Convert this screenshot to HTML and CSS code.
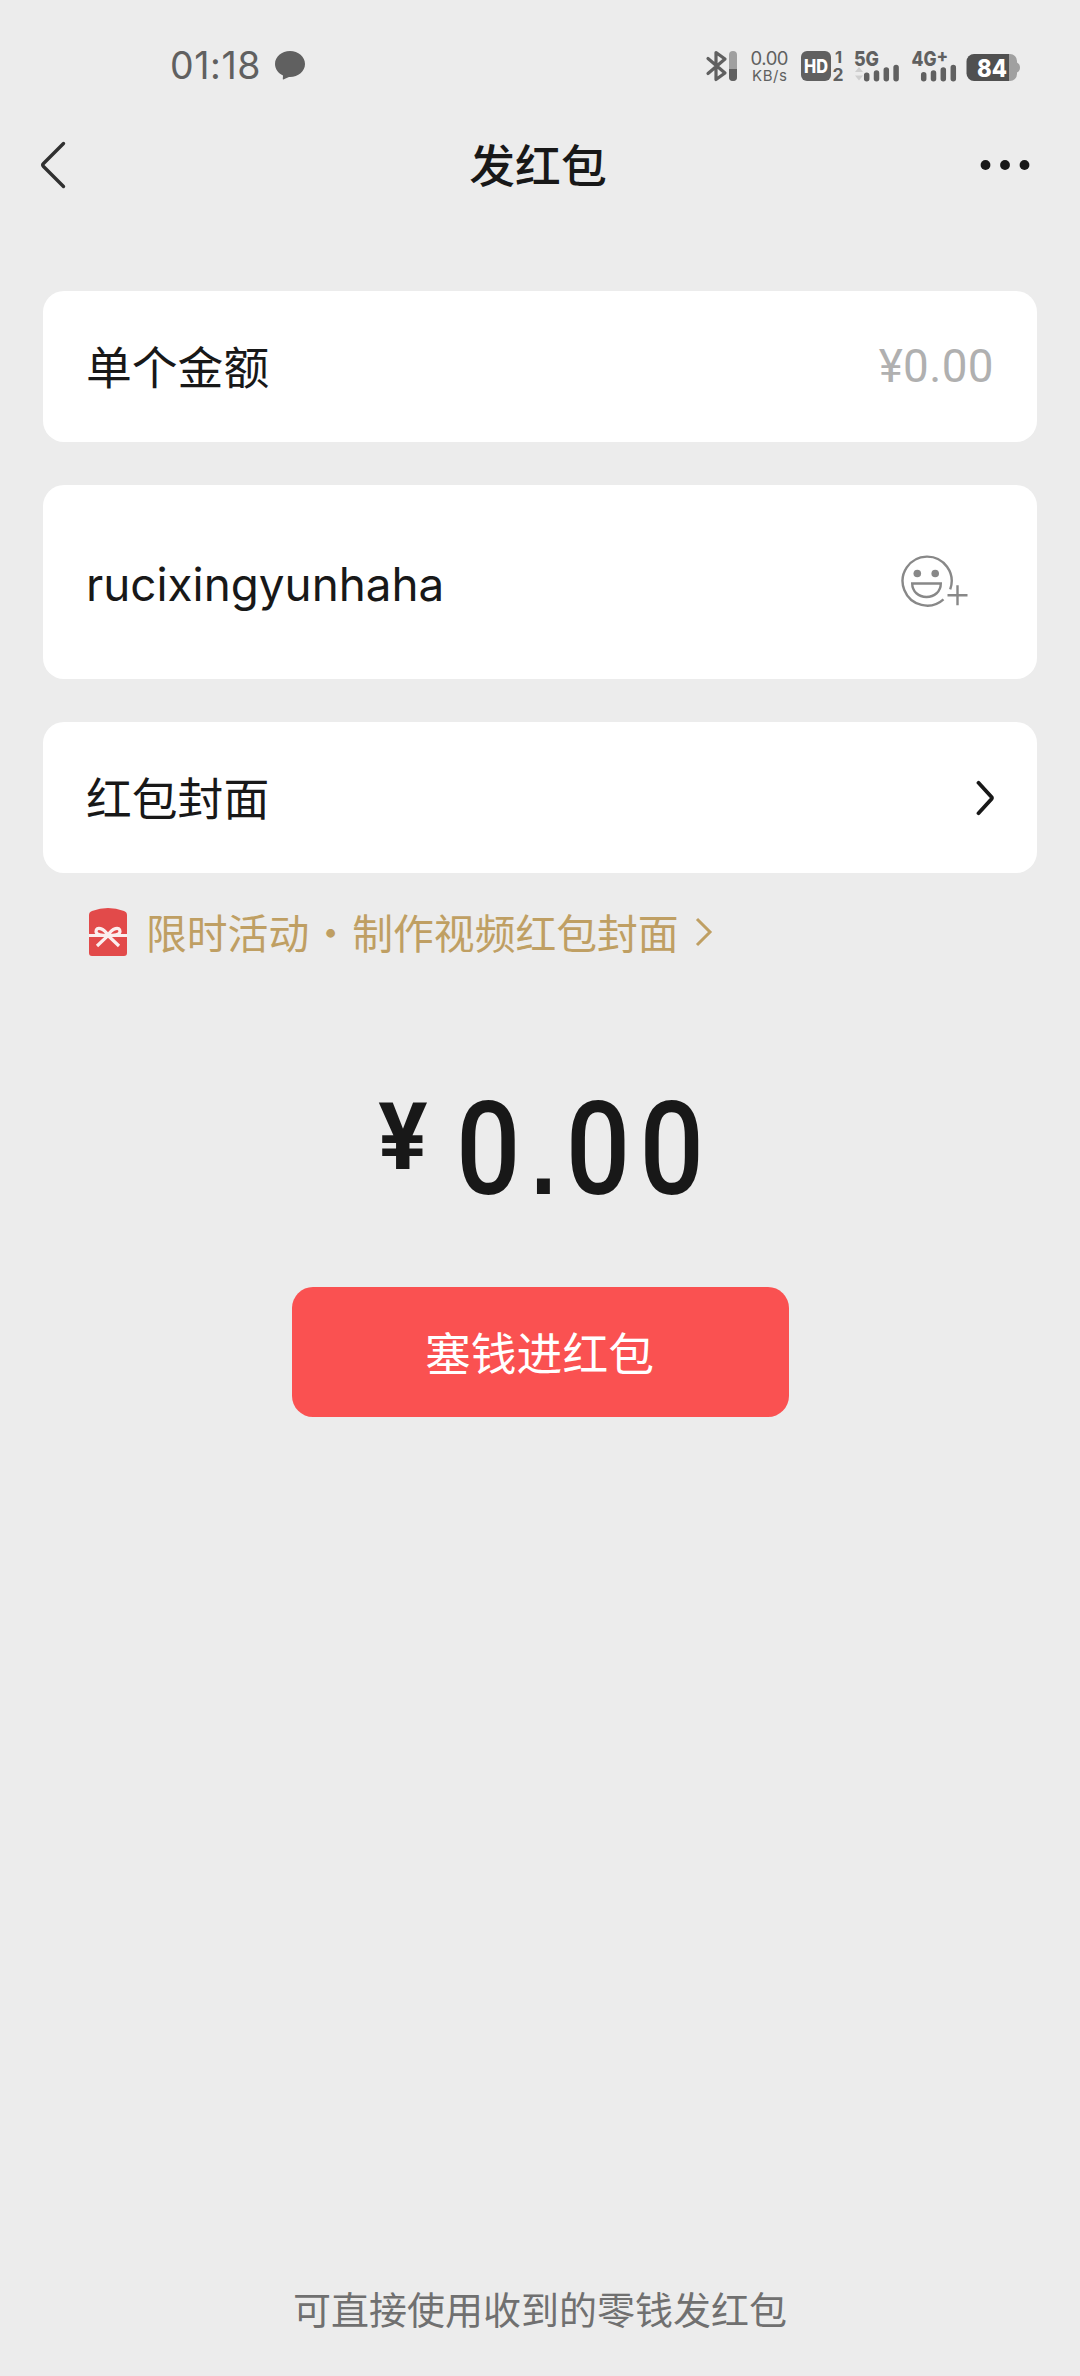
FILE: index.html
```html
<!DOCTYPE html>
<html lang="zh-CN">
<head>
<meta charset="utf-8">
<title>发红包</title>
<link rel="stylesheet" href="styles.css">
</head>
<body>
<div class="screen">
  <header class="status">
    <div class="status-left">
      <span class="time">01:18</span>
      <svg class="bubble" width="30" height="30" viewBox="0 0 30 30"><path d="M15 1C23.3 1 30 6.800 30 14S23.300 27 15 27L14 27Q11 28.500 8.400 29.400Q7.600 29.500 7.800 28.500L8 25.400C3.200 23.200 0 19 0 14C0 6.800 6.700 1 15 1Z"/></svg>
    </div>
    <svg class="status-icons" width="320" height="40" viewBox="702 46 320 40">
      <path class="bt" d="M708 58.500L725 73L716 79.500V52.500L725 59L708 73.500"/>
      <rect class="soft" x="729" y="51" width="8" height="30" rx="4"/>
      <path d="M729 69h8v8a4 4 0 0 1-8 0Z"/>
      <text class="thin" x="750.500" y="65" font-size="18.500" textLength="38">0.00</text>
      <text class="thin" x="752" y="81" font-size="15" textLength="35">KB/s</text>
      <rect x="801" y="51" width="30" height="30" rx="6"/>
      <text class="bold light" x="804" y="73" font-size="18.500" textLength="24" lengthAdjust="spacingAndGlyphs">HD</text>
      <text class="semi" x="835" y="62.500" font-size="16.500">1</text>
      <text class="semi" x="832.500" y="80.500" font-size="17.500">2</text>
      <text class="bold" x="854" y="65.500" font-size="20.500" textLength="25" lengthAdjust="spacingAndGlyphs">5G</text>
      <path class="faint" d="M859 67l4 5h-8ZM859 80.500l4-5h-8Z"/>
      <g class="bars">
        <path d="M866.700 75.200v3.600M876.500 73v5.800M886.300 70v8.800M896.100 67.500v11.300"/>
        <path d="M923.700 74.700v4.100M933.500 73v5.800M943.300 70v8.800M953.300 67.500v11.300"/>
      </g>
      <text class="bold" x="911.500" y="65.500" font-size="20.500" textLength="25" lengthAdjust="spacingAndGlyphs">4G</text>
      <text class="bold" x="936.500" y="62" font-size="17">+</text>
      <path class="soft" d="M1009 54h1a7 7 0 0 1 7 7v1.500q3 1.500 3 5t-3 5v1.500a7 7 0 0 1-7 7h-1Z"/>
      <path class="cell" d="M1009 54v27h-35a7.500 7.500 0 0 1-7.500-7.500v-12a7.500 7.500 0 0 1 7.500-7.500Z"/>
      <text class="bold light" x="977" y="76.500" font-size="25" textLength="30" lengthAdjust="spacingAndGlyphs">84</text>
    </svg>
  </header>

  <nav class="nav">
    <svg width="28" height="48" viewBox="0 0 28 48"><path class="back" d="M24.500 2.500L4.500 22.500Q3 24 4.500 25.500L24.500 45.500"/></svg>
    <h1 class="title">发红包</h1>
    <svg width="50" height="12" viewBox="0 0 50 12"><circle cx="5.500" cy="6" r="4.900"/><circle cx="25" cy="6" r="4.900"/><circle cx="44.500" cy="6" r="4.900"/></svg>
  </nav>

  <main class="form">
    <section class="card">
      <span class="label">单个金额</span>
      <span class="placeholder">¥0.00</span>
    </section>
    <section class="card card-message">
      <span class="message">rucixingyunhaha</span>
      <svg class="emoji" width="70" height="56" viewBox="0 0 70 56">
        <path d="M50.200 35.300A24.500 24.500 0 1 0 43.500 45.300"/>
        <path d="M12.200 29.500H40.800C40.800 37.500 34.400 43 26.500 43S12.200 37.500 12.200 29.500Z"/>
        <path d="M47.500 41.200h20M57.500 31.200v20"/>
        <circle cx="17.300" cy="19.500" r="3.800"/><circle cx="35.200" cy="19.500" r="3.800"/>
      </svg>
    </section>
    <section class="card">
      <span class="label">红包封面</span>
      <svg class="chevron" width="18" height="36" viewBox="0 0 18 36"><path d="M2.500 2.800L15.500 17Q16.300 18 15.500 19L2.500 33.200"/></svg>
    </section>
    <div class="promo">
      <svg class="gift" width="38" height="48" viewBox="0 0 38 48">
        <path class="gift-body" d="M0 7Q0 4 3 3Q19-3 35 3Q38 4 38 7V45Q38 48 35 48H3Q0 48 0 45Z"/>
        <path class="ribbon" d="M0 27.500H38M19 27.500C15 20 7 18 7 23.500Q7 27.500 19 27.500C23 20 31 18 31 23.500Q31 27.500 19 27.500L8 38M19 27.500L30 38"/>
      </svg>
      <span class="promo-text">限时活动 · 制作视频红包封面</span>
      <svg class="promo-arrow" width="18" height="30" viewBox="0 0 18 30"><path d="M2 2L15 15L2 28"/></svg>
    </div>
    <div class="total"><span class="yen">¥</span><span class="sum">0<span class="point">.</span>00</span></div>
    <button class="submit" type="button">塞钱进红包</button>
  </main>
  <footer class="note">可直接使用收到的零钱发红包</footer>
</div>
</body>
</html>
```
FILE: styles.css
```css
* { box-sizing: border-box; }
body { margin: 0; background: #ececec; color: #181818; font-family: Inter, "Noto Sans CJK SC", sans-serif; }
svg { display: block; flex: none; }
.screen { width: 1080px; height: 2376px; display: flex; flex-direction: column; }

.status { height: 110px; padding: 46px 58px 0 170px; display: flex; justify-content: space-between; align-items: flex-start; color: #606060; fill: #606060; }
.status-left { display: flex; gap: 14px; }
.time { font-size: 37.500px; line-height: 40px; width: 91px; letter-spacing: 0.600px; white-space: nowrap; }
.bubble { margin-top: 4px; }
.status-icons { font-family: Inter, sans-serif; }
.bt { fill: none; stroke: #606060; stroke-width: 3.200; stroke-linejoin: round; stroke-linecap: round; }
.soft { fill: #a0a0a0; }
.faint { fill: #cfcfcf; }
.cell { fill: #505050; }
.semi { font-weight: 700; }
.bold { font-weight: 800; }
.light { fill: #fff; }
.bars { stroke: #606060; stroke-width: 5.500; stroke-linecap: round; }

.nav { height: 109px; padding: 0 50px 0 39px; display: flex; justify-content: space-between; align-items: center; fill: #181818; }
.title { margin: 0 0 0 29px; padding-top: 5px; font-size: 45.800px; font-weight: 500; line-height: 60px; }
.back { fill: none; stroke: #303030; stroke-width: 3.400; stroke-linecap: round; }

.form { padding: 72px 43px 0; display: flex; flex-direction: column; }
.card { height: 151px; margin-bottom: 43px; padding: 0 43px; display: flex; align-items: center; justify-content: space-between; background: #fff; border-radius: 21px; font-size: 45.800px; line-height: 60px; }
.card-message { height: 194px; }
.label { padding-top: 4px; }
.message { padding-top: 6px; }
.placeholder { font-family: Roboto, sans-serif; color: #b0b0b0; letter-spacing: 0.400px; }
.emoji { margin-right: 24px; fill: none; stroke: #888; stroke-width: 2.400; }
.emoji circle { fill: #888; stroke: none; }
.chevron { fill: none; stroke: #181818; stroke-width: 3.800; stroke-linecap: round; }

.promo { height: 48px; margin-top: -8px; padding-left: 46px; display: flex; align-items: center; color: #bf9f63; }
.gift-body { fill: #e24a4a; }
.ribbon { fill: none; stroke: #fbeeee; stroke-width: 3.200; }
.promo-text { margin-left: 19px; font-family: "Noto Sans CJK SC", sans-serif; font-size: 40.800px; line-height: 48px; word-spacing: -8px; white-space: nowrap; }
.promo-arrow { margin-left: 16px; fill: none; stroke: #bf9f63; stroke-width: 3; }

.total { height: 130px; margin-top: 126px; padding-left: 333px; display: flex; align-items: flex-start; font-family: Roboto, sans-serif; }
.yen { width: 54px; padding-top: 2px; text-align: center; font-size: 92px; line-height: 108px; font-weight: 700; }
.sum { margin-left: 26px; padding-top: 3px; font-size: 129px; line-height: 130px; font-weight: 500; letter-spacing: 10.500px; white-space: nowrap; transform: scaleX(0.88); transform-origin: left; }
.point { padding-left: 1px; font: 700 104px/1 "Liberation Sans", sans-serif; letter-spacing: 11px; }
.submit { align-self: center; width: 497px; height: 130px; margin-top: 75px; padding: 0 1px 3px 0; border: 0; border-radius: 21px; background: #fa5151; color: #fff; font: 400 45.800px "Noto Sans CJK SC", sans-serif; }
.note { margin-top: auto; padding-bottom: 38px; text-align: center; font-size: 38px; line-height: 56px; color: #707070; }
```
